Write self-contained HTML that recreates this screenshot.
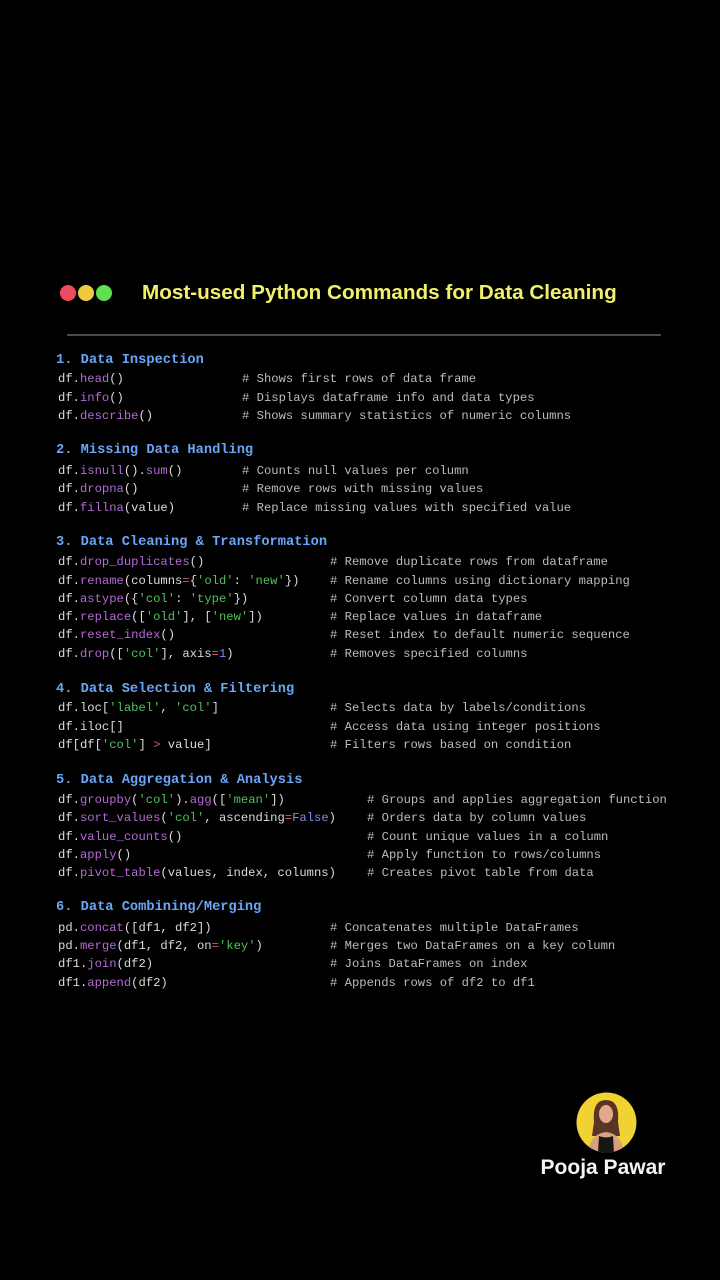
<!DOCTYPE html>
<html><head><meta charset="utf-8"><style>
html,body{margin:0;padding:0;background:#000;width:720px;height:1280px;overflow:hidden;position:relative}
.l{position:absolute;font-family:"Liberation Mono",monospace;font-size:12.2px;color:#dcdcdc;white-space:pre;line-height:16px}
.h{position:absolute;font-family:"Liberation Mono",monospace;font-size:13.7px;font-weight:bold;color:#6aa6f8;white-space:pre;line-height:18px}
.c{position:absolute;font-family:"Liberation Mono",monospace;font-size:12.2px;color:#bdbdbd;white-space:pre;line-height:16px}
.m{color:#b56ad6}.s{color:#4fc25a}.o{color:#e0508a}.k{color:#7f8cf0}
.dot{position:absolute;top:285px;width:16px;height:16px;border-radius:50%}
</style></head><body>
<div class="dot" style="left:60px;background:#ef4a5f"></div>
<div class="dot" style="left:78px;background:#f1c93c"></div>
<div class="dot" style="left:96px;background:#5ee04e"></div>
<div style="position:absolute;left:142px;top:280px;font-family:'Liberation Sans',sans-serif;font-weight:bold;font-size:20.7px;color:#f1f06a;line-height:26px">Most-used Python Commands for Data Cleaning</div>
<div style="position:absolute;left:67px;top:334px;width:594px;height:2px;background:#4a4a4a"></div>

<div class="h" style="left:56px;top:352px">1. Data Inspection</div>
<div class="l" style="left:58px;top:371px">df.<span class="m">head</span>()</div><div class="c" style="left:242px;top:371px"># Shows first rows of data frame</div>
<div class="l" style="left:58px;top:390px">df.<span class="m">info</span>()</div><div class="c" style="left:242px;top:390px"># Displays dataframe info and data types</div>
<div class="l" style="left:58px;top:408px">df.<span class="m">describe</span>()</div><div class="c" style="left:242px;top:408px"># Shows summary statistics of numeric columns</div>

<div class="h" style="left:56px;top:442px">2. Missing Data Handling</div>
<div class="l" style="left:58px;top:463px">df.<span class="m">isnull</span>().<span class="m">sum</span>()</div><div class="c" style="left:242px;top:463px"># Counts null values per column</div>
<div class="l" style="left:58px;top:481px">df.<span class="m">dropna</span>()</div><div class="c" style="left:242px;top:481px"># Remove rows with missing values</div>
<div class="l" style="left:58px;top:500px">df.<span class="m">fillna</span>(value)</div><div class="c" style="left:242px;top:500px"># Replace missing values with specified value</div>

<div class="h" style="left:56px;top:534px">3. Data Cleaning &amp; Transformation</div>
<div class="l" style="left:58px;top:554px">df.<span class="m">drop_duplicates</span>()</div><div class="c" style="left:330px;top:554px"># Remove duplicate rows from dataframe</div>
<div class="l" style="left:58px;top:573px">df.<span class="m">rename</span>(columns<span class="o">=</span>{<span class="s">'old'</span>: <span class="s">'new'</span>})</div><div class="c" style="left:330px;top:573px"># Rename columns using dictionary mapping</div>
<div class="l" style="left:58px;top:591px">df.<span class="m">astype</span>({<span class="s">'col'</span>: <span class="s">'type'</span>})</div><div class="c" style="left:330px;top:591px"># Convert column data types</div>
<div class="l" style="left:58px;top:609px">df.<span class="m">replace</span>([<span class="s">'old'</span>], [<span class="s">'new'</span>])</div><div class="c" style="left:330px;top:609px"># Replace values in dataframe</div>
<div class="l" style="left:58px;top:627px">df.<span class="m">reset_index</span>()</div><div class="c" style="left:330px;top:627px"># Reset index to default numeric sequence</div>
<div class="l" style="left:58px;top:646px">df.<span class="m">drop</span>([<span class="s">'col'</span>], axis<span class="o">=</span><span class="k">1</span>)</div><div class="c" style="left:330px;top:646px"># Removes specified columns</div>

<div class="h" style="left:56px;top:681px">4. Data Selection &amp; Filtering</div>
<div class="l" style="left:58px;top:700px">df.loc[<span class="s">'label'</span>, <span class="s">'col'</span>]</div><div class="c" style="left:330px;top:700px"># Selects data by labels/conditions</div>
<div class="l" style="left:58px;top:719px">df.iloc[]</div><div class="c" style="left:330px;top:719px"># Access data using integer positions</div>
<div class="l" style="left:58px;top:737px">df[df[<span class="s">'col'</span>] <span class="o">&gt;</span> value]</div><div class="c" style="left:330px;top:737px"># Filters rows based on condition</div>

<div class="h" style="left:56px;top:772px">5. Data Aggregation &amp; Analysis</div>
<div class="l" style="left:58px;top:792px">df.<span class="m">groupby</span>(<span class="s">'col'</span>).<span class="m">agg</span>([<span class="s">'mean'</span>])</div><div class="c" style="left:367px;top:792px"># Groups and applies aggregation function</div>
<div class="l" style="left:58px;top:810px">df.<span class="m">sort_values</span>(<span class="s">'col'</span>, ascending<span class="o">=</span><span class="k">False</span>)</div><div class="c" style="left:367px;top:810px"># Orders data by column values</div>
<div class="l" style="left:58px;top:829px">df.<span class="m">value_counts</span>()</div><div class="c" style="left:367px;top:829px"># Count unique values in a column</div>
<div class="l" style="left:58px;top:847px">df.<span class="m">apply</span>()</div><div class="c" style="left:367px;top:847px"># Apply function to rows/columns</div>
<div class="l" style="left:58px;top:865px">df.<span class="m">pivot_table</span>(values, index, columns)</div><div class="c" style="left:367px;top:865px"># Creates pivot table from data</div>

<div class="h" style="left:56px;top:899px">6. Data Combining/Merging</div>
<div class="l" style="left:58px;top:920px">pd.<span class="m">concat</span>([df1, df2])</div><div class="c" style="left:330px;top:920px"># Concatenates multiple DataFrames</div>
<div class="l" style="left:58px;top:938px">pd.<span class="m">merge</span>(df1, df2, on<span class="o">=</span><span class="s">'key'</span>)</div><div class="c" style="left:330px;top:938px"># Merges two DataFrames on a key column</div>
<div class="l" style="left:58px;top:956px">df1.<span class="m">join</span>(df2)</div><div class="c" style="left:330px;top:956px"># Joins DataFrames on index</div>
<div class="l" style="left:58px;top:975px">df1.<span class="m">append</span>(df2)</div><div class="c" style="left:330px;top:975px"># Appends rows of df2 to df1</div>

<svg style="position:absolute;left:576px;top:1092px" width="61" height="61" viewBox="0 0 61 61">
<defs><clipPath id="cp"><circle cx="30.5" cy="30.5" r="30"/></clipPath></defs>
<circle cx="30.5" cy="30.5" r="30" fill="#f0d232"/>
<g clip-path="url(#cp)">
<path d="M18 30 Q16 8 30 8 Q44 8 42 30 L44 44 L16 44 Z" fill="#5a3424"/>
<ellipse cx="30" cy="22" rx="7" ry="9" fill="#e2a98c"/>
<path d="M12 61 Q14 42 30 40 Q46 42 48 61 Z" fill="#d9a080"/>
<path d="M22 61 L23 44 Q30 47 37 44 L38 61 Z" fill="#161616"/>
</g>
</svg>
<div style="position:absolute;left:526px;top:1156px;width:154px;text-align:center;font-family:'Liberation Sans',sans-serif;font-weight:bold;font-size:21px;color:#f4f4f4">Pooja Pawar</div>
</body></html>
